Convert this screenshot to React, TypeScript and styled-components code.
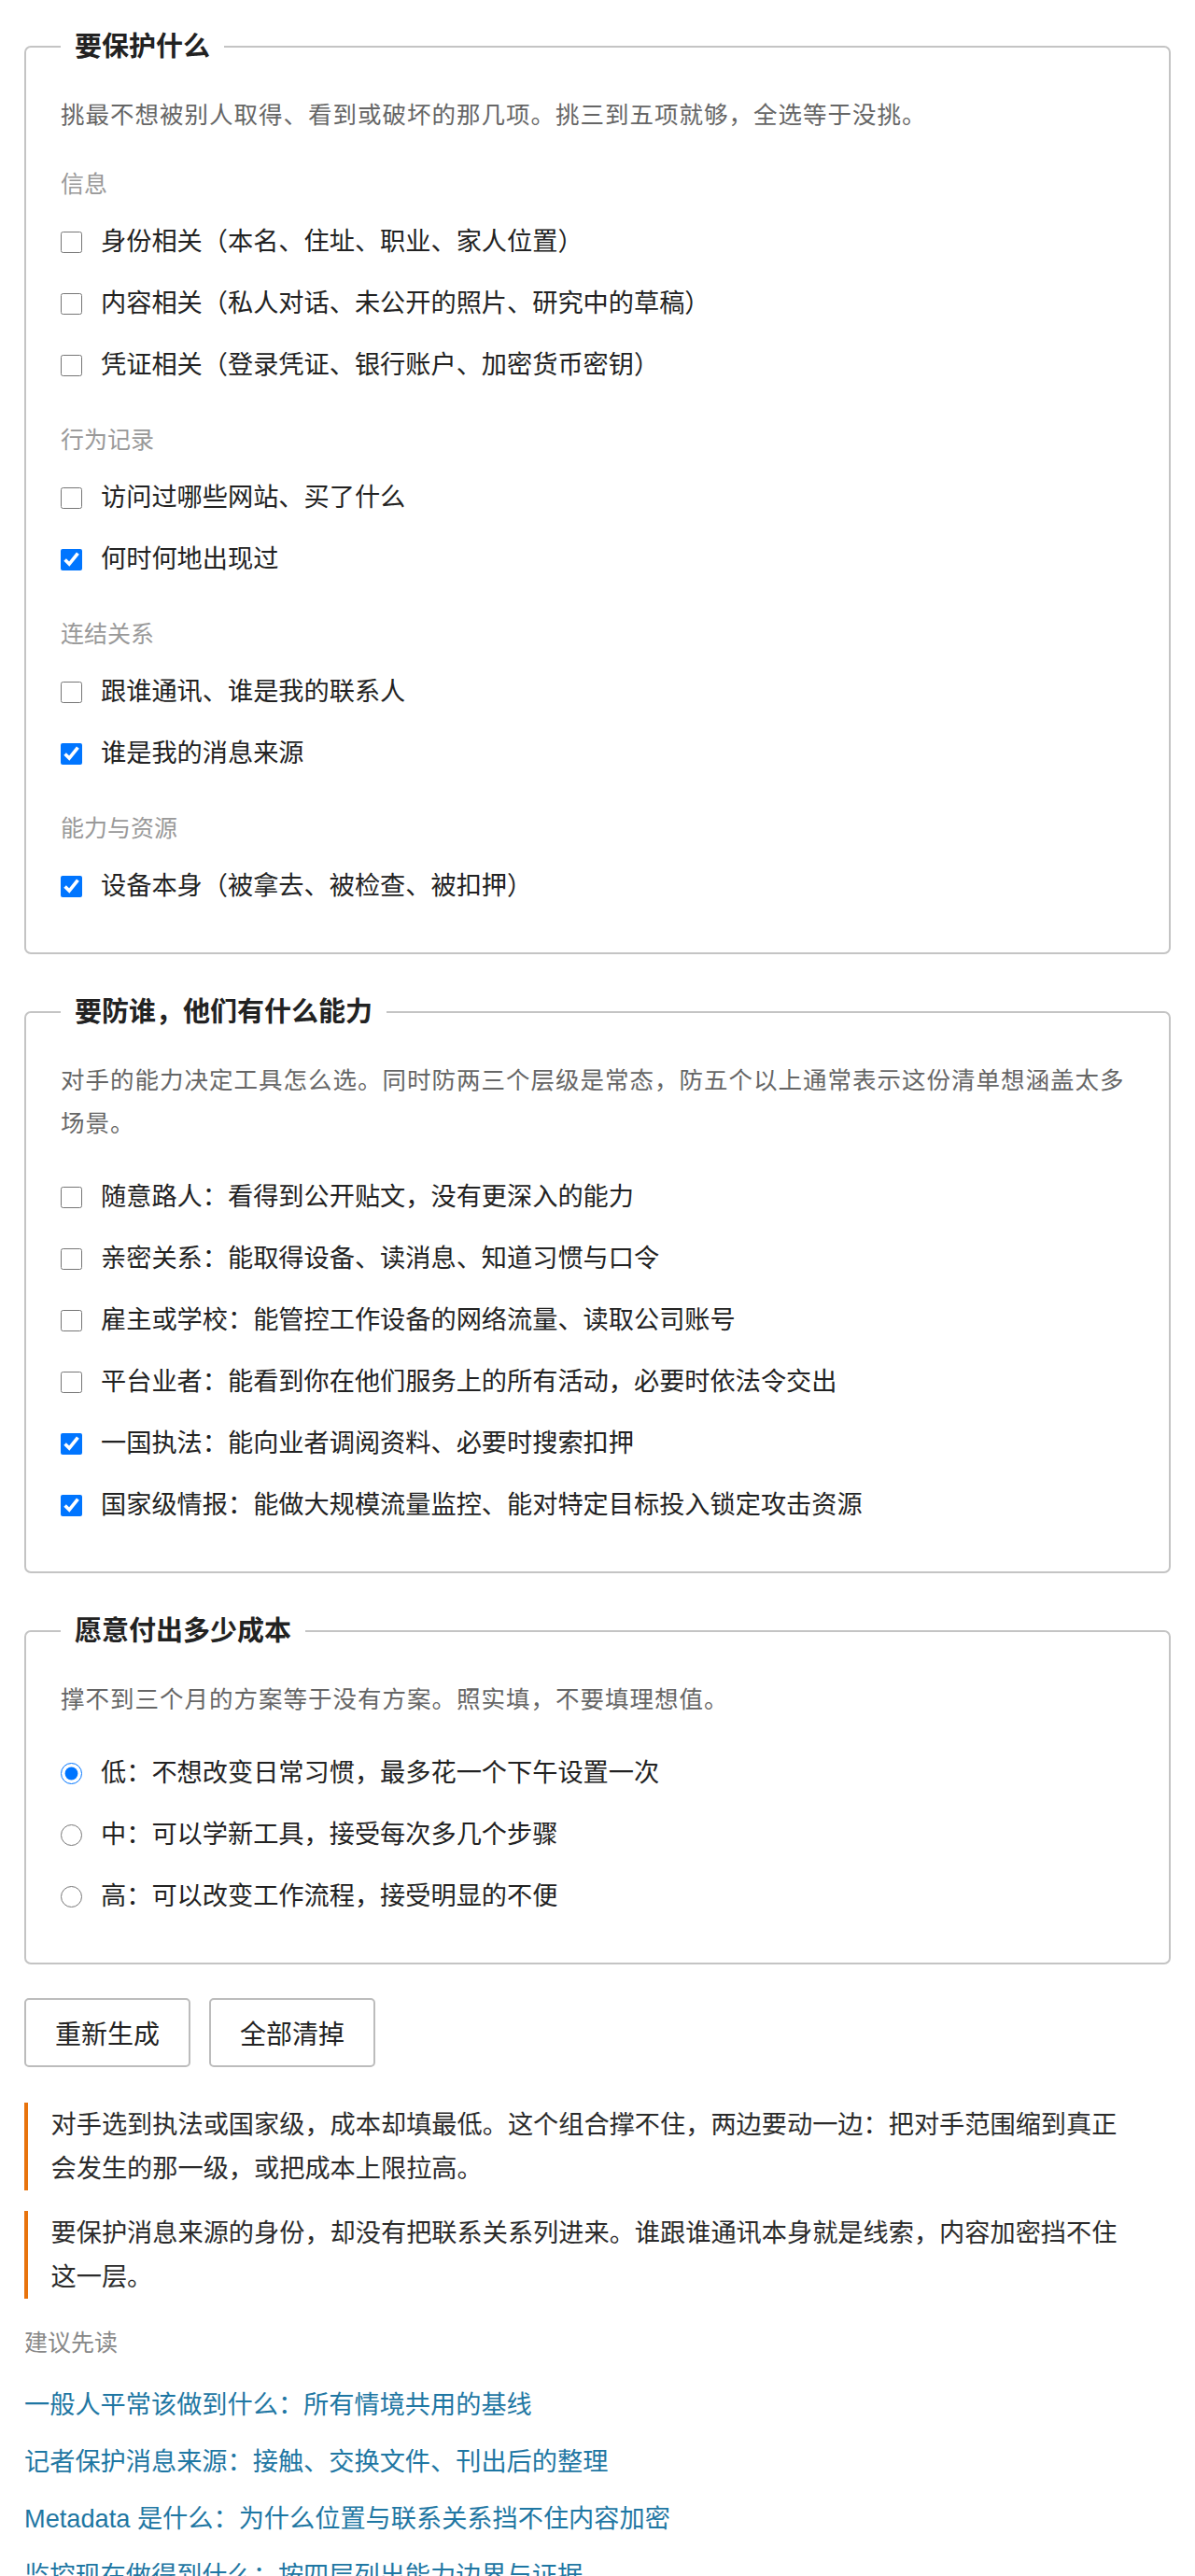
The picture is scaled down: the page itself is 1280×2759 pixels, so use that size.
import React from "react"
import styled, { createGlobalStyle } from "styled-components"

const GlobalStyle = createGlobalStyle`
  html, body {
    margin: 0;
    padding: 0;
    background: #fff;
  }
  body {
    font-family: "Liberation Sans", "Noto Sans CJK SC", sans-serif;
    color: #222;
  }
`

const Page = styled.main`
  padding: 28px 26px 0;
`

const Box = styled.fieldset<{ $last?: boolean }>`
  margin: 0 0 ${(p) => (p.$last ? 36 : 40)}px;
  padding: 28px 37px 48px;
  min-width: 0;
  border: 2px solid #c4c4c4;
  border-radius: 7px;
`

const Legend = styled.legend`
  padding: 0 15px;
  font-size: 29px;
  font-weight: 700;
  line-height: 44px;
  color: #222;
`

const Desc = styled.p`
  margin: 0 0 33px;
  font-size: 25.5px;
  letter-spacing: 1px;
  line-height: 46px;
  color: #666;
`

const Group = styled.div`
  display: flex;
  flex-direction: column;
  & + & {
    margin-top: 39px;
  }
`

const GroupTitle = styled.div`
  margin-bottom: 21px;
  font-size: 25px;
  line-height: 36px;
  color: #999;
`

const OptionList = styled.div`
  display: flex;
  flex-direction: column;
  gap: 20px;
`

const Option = styled.label`
  display: flex;
  align-items: center;
  gap: 20px;
  height: 46px;
  font-size: 27.2px;
  line-height: 46px;
  color: #222;
`

const Tick = styled.input`
  flex: none;
  width: 23px;
  height: 23px;
  margin: 0;
`

const Actions = styled.div`
  display: flex;
  gap: 20px;
`

const Button = styled.button`
  width: 178px;
  height: 74px;
  padding: 0;
  font-family: inherit;
  font-size: 28px;
  color: #222;
  background: #fff;
  border: 2px solid #bcbcbc;
  border-radius: 5px;
`

const Notice = styled.p`
  margin: 38px 0 0;
  padding: 0 44px 0 24.5px;
  border-left: 4.5px solid #e8730c;
  font-size: 27.2px;
  line-height: 47px;
  color: #2b2b2b;
  & + & {
    margin-top: 22px;
  }
`

const RelatedTitle = styled.div`
  margin-top: 26px;
  font-size: 25px;
  line-height: 43px;
  color: #888;
`

const LinkList = styled.ul`
  display: flex;
  flex-direction: column;
  gap: 17px;
  margin: 23px 0 0;
  padding: 0;
  list-style: none;
`

const Link = styled.a`
  font-size: 27.2px;
  line-height: 44px;
  color: #1f77a3;
  text-decoration: none;
`

type Item = { label: string; checked?: boolean }

const assetGroups: { title: string; items: Item[] }[] = [
  {
    title: "信息",
    items: [
      { label: "身份相关（本名、住址、职业、家人位置）" },
      { label: "内容相关（私人对话、未公开的照片、研究中的草稿）" },
      { label: "凭证相关（登录凭证、银行账户、加密货币密钥）" },
    ],
  },
  {
    title: "行为记录",
    items: [
      { label: "访问过哪些网站、买了什么" },
      { label: "何时何地出现过", checked: true },
    ],
  },
  {
    title: "连结关系",
    items: [
      { label: "跟谁通讯、谁是我的联系人" },
      { label: "谁是我的消息来源", checked: true },
    ],
  },
  {
    title: "能力与资源",
    items: [{ label: "设备本身（被拿去、被检查、被扣押）", checked: true }],
  },
]

const adversaries: Item[] = [
  { label: "随意路人：看得到公开贴文，没有更深入的能力" },
  { label: "亲密关系：能取得设备、读消息、知道习惯与口令" },
  { label: "雇主或学校：能管控工作设备的网络流量、读取公司账号" },
  { label: "平台业者：能看到你在他们服务上的所有活动，必要时依法令交出" },
  { label: "一国执法：能向业者调阅资料、必要时搜索扣押", checked: true },
  { label: "国家级情报：能做大规模流量监控、能对特定目标投入锁定攻击资源", checked: true },
]

const costs: Item[] = [
  { label: "低：不想改变日常习惯，最多花一个下午设置一次", checked: true },
  { label: "中：可以学新工具，接受每次多几个步骤" },
  { label: "高：可以改变工作流程，接受明显的不便" },
]

const readings = [
  "一般人平常该做到什么：所有情境共用的基线",
  "记者保护消息来源：接触、交换文件、刊出后的整理",
  "Metadata 是什么：为什么位置与联系关系挡不住内容加密",
  "监控现在做得到什么：按四层列出能力边界与证据",
]

const App: React.FC = () => {
  return (
    <Page>
      <GlobalStyle />
      <Box>
        <Legend>要保护什么</Legend>
        <Desc>挑最不想被别人取得、看到或破坏的那几项。挑三到五项就够，全选等于没挑。</Desc>
        {assetGroups.map((g) => (
          <Group key={g.title}>
            <GroupTitle>{g.title}</GroupTitle>
            <OptionList>
              {g.items.map((it) => (
                <Option key={it.label}>
                  <Tick type="checkbox" defaultChecked={it.checked} />
                  {it.label}
                </Option>
              ))}
            </OptionList>
          </Group>
        ))}
      </Box>

      <Box>
        <Legend>要防谁，他们有什么能力</Legend>
        <Desc>
          对手的能力决定工具怎么选。同时防两三个层级是常态，防五个以上通常表示这份清单想涵盖太多场景。
        </Desc>
        <OptionList>
          {adversaries.map((it) => (
            <Option key={it.label}>
              <Tick type="checkbox" defaultChecked={it.checked} />
              {it.label}
            </Option>
          ))}
        </OptionList>
      </Box>

      <Box $last>
        <Legend>愿意付出多少成本</Legend>
        <Desc>撑不到三个月的方案等于没有方案。照实填，不要填理想值。</Desc>
        <OptionList>
          {costs.map((it) => (
            <Option key={it.label}>
              <Tick type="radio" name="cost" defaultChecked={it.checked} />
              {it.label}
            </Option>
          ))}
        </OptionList>
      </Box>

      <Actions>
        <Button type="button">重新生成</Button>
        <Button type="button">全部清掉</Button>
      </Actions>

      <Notice>
        对手选到执法或国家级，成本却填最低。这个组合撑不住，两边要动一边：把对手范围缩到真正会发生的那一级，或把成本上限拉高。
      </Notice>
      <Notice>
        要保护消息来源的身份，却没有把联系关系列进来。谁跟谁通讯本身就是线索，内容加密挡不住这一层。
      </Notice>

      <RelatedTitle>建议先读</RelatedTitle>
      <LinkList>
        {readings.map((r) => (
          <li key={r}>
            <Link href="#">{r}</Link>
          </li>
        ))}
      </LinkList>
    </Page>
  )
}

export default App
